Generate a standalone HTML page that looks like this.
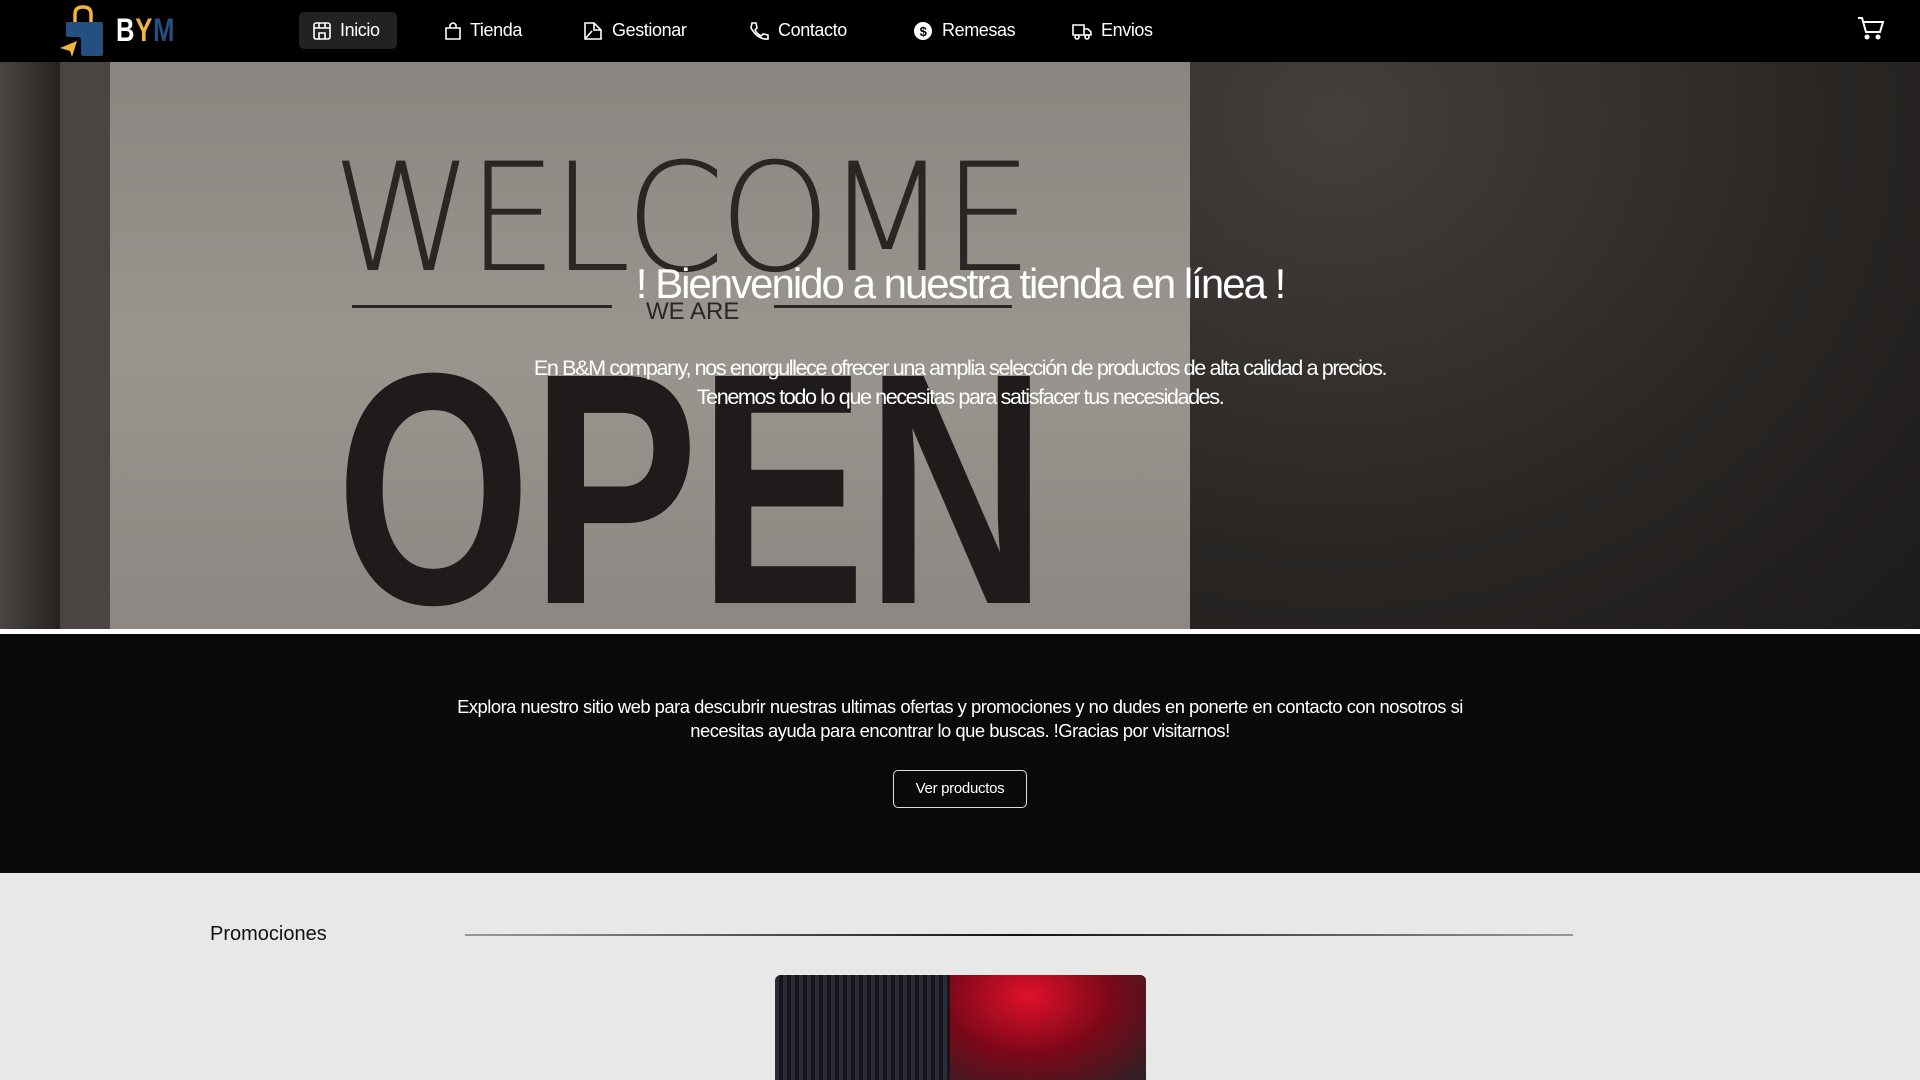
<!DOCTYPE html>
<html><head><meta charset="utf-8"><style>
*{margin:0;padding:0;box-sizing:border-box}
body{width:1920px;height:1080px;overflow:hidden;background:#e8e8e8;font-family:"Liberation Sans",sans-serif;position:relative}
.nav{position:absolute;left:0;top:0;width:1920px;height:62px;background:#000}
.ni{position:absolute;top:12px;height:37px;display:flex;align-items:center;color:#fff;font-size:18px;letter-spacing:-0.4px}
.ni svg{margin-right:8px}
.hero{position:absolute;left:0;top:62px;width:1920px;height:567px;background:#2f2b29;overflow:hidden}
.abs{position:absolute}
</style></head><body>
<div class="nav">
 <svg class="abs" style="left:58px;top:4px" width="50" height="54" viewBox="0 0 50 54">
  <path d="M17 18 V10 Q17 3 25 3 Q33 3 33 10 V18" fill="none" stroke="#f2b43c" stroke-width="3.5"/>
  <path d="M9 18 H43 Q45 18 45 20 V50 Q45 52 43 52 H26 Q23 52 23 49 V36 Q23 33 20 33 H10 Q8 33 8 31 V20 Q8 18 9 18Z" fill="#23507e"/>
  <path d="M2 44 L19 37 L14 53 L12 47Z" fill="#f2b43c"/>
 </svg>
 <div class="abs" style="left:116px;top:12px;font:bold 32px 'Liberation Sans Narrow','Liberation Sans',sans-serif;letter-spacing:1px;transform:scaleX(.8);transform-origin:left"><span style="color:#fff">B</span><span style="color:#f2b43c">Y</span><span style="color:#23507e">M</span></div>
 <div class="abs" style="left:299px;top:12px;width:98px;height:37px;background:#222;border-radius:5px"></div>
 <div class="ni" style="left:312px"><svg width="20" height="20" viewBox="0 0 20 20" fill="none" stroke="#fff" stroke-width="1.6"><rect x="2" y="2" width="16" height="16" rx="2"/><path d="M2 7H18M7 2V7M13 2V7M7 18V12H13V18"/></svg>Inicio</div>
 <div class="ni" style="left:444px"><svg width="18" height="20" viewBox="0 0 18 20" fill="none" stroke="#fff" stroke-width="1.6"><path d="M2 7H16V18H2Z M6 7V4Q9 0 12 4V7"/></svg>Tienda</div>
 <div class="ni" style="left:582px"><svg width="22" height="20" viewBox="0 0 22 20" fill="none" stroke="#fff" stroke-width="1.6"><path d="M3 2H12L19 9V18H3Z M3 18L10 10 M12 2V9H19"/></svg>Gestionar</div>
 <div class="ni" style="left:748px"><svg width="22" height="20" viewBox="0 0 22 20" fill="none" stroke="#fff" stroke-width="1.6"><path d="M4 2L8 2L9 7L7 9Q9 13 13 15L15 13L20 14V18Q10 19 3 7Z"/></svg>Contacto</div>
 <div class="ni" style="left:912px"><svg width="22" height="22" viewBox="0 0 22 22"><circle cx="11" cy="11" r="9" fill="#fff"/><text x="11" y="16" text-anchor="middle" font-size="13" font-weight="bold" fill="#000" font-family="Liberation Sans">$</text></svg>Remesas</div>
 <div class="ni" style="left:1071px"><svg width="22" height="20" viewBox="0 0 22 20" fill="none" stroke="#fff" stroke-width="1.6"><path d="M2 4H13V14H2Z M13 8H17L20 11V14H13"/><circle cx="6" cy="16" r="2" fill="#000"/><circle cx="16" cy="16" r="2" fill="#000"/></svg>Envios</div>
 <svg class="abs" style="left:1857px;top:16px" width="28" height="26" viewBox="0 0 28 26" fill="none" stroke="#fff" stroke-width="2"><path d="M1 2H5L9 16H23L26 6H7"/><circle cx="10" cy="21" r="1.5" fill="#fff"/><circle cx="21" cy="21" r="1.5" fill="#fff"/></svg>
</div>
<div class="hero">
 <div class="abs" style="left:0;top:0;width:60px;height:567px;background:linear-gradient(90deg,#4a4543,#25221f)"></div>
 <div class="abs" style="left:60px;top:0;width:50px;height:567px;background:#4a4542"></div>
 <div class="abs" style="left:110px;top:0;width:1080px;height:567px;background:linear-gradient(180deg,#8a8580,#9a958f 50%,#8c8782)"></div>
 <div class="abs" style="left:1190px;top:0;width:730px;height:567px;background:radial-gradient(ellipse at 20% 10%,#453f3c,#292624 60%,#1d1b1a)"></div>
 <div class="abs" style="left:332px;top:70px;font:200 150px 'DejaVu Sans',sans-serif;color:#2a2624;letter-spacing:-6px;transform:scaleX(.95);transform-origin:left">WELCOME</div>
 <div class="abs" style="left:352px;top:243px;width:260px;height:3px;background:#2a2624"></div>
 <div class="abs" style="left:774px;top:243px;width:238px;height:3px;background:#2a2624"></div>
 <div class="abs" style="left:646px;top:236px;font:24px 'Liberation Sans',sans-serif;color:#2a2624">WE ARE</div>
 <div class="abs" style="left:336px;top:262px;font:bold 330px 'Liberation Sans Narrow','Liberation Sans',sans-serif;color:#1e1b1a;transform:scaleX(.76);transform-origin:left;line-height:1">OPEN</div>
 <div class="abs" style="left:0;top:198px;width:1920px;text-align:center;color:#fff;font-size:42px;letter-spacing:-2px">! Bienvenido a nuestra tienda en línea !</div>
 <div class="abs" style="left:0;top:291px;width:1920px;text-align:center;color:#fff;font-size:21.6px;letter-spacing:-1.4px;line-height:29px">En B&amp;M company, nos enorgullece ofrecer una amplia selección de productos de alta calidad a precios.<br>Tenemos todo lo que necesitas para satisfacer tus necesidades.</div>
</div>
<div class="abs" style="left:0;top:629px;width:1920px;height:5px;background:#fff"></div>
<div class="abs" style="left:0;top:634px;width:1920px;height:239px;background:#0a0a0a"></div>
<div class="abs" style="left:0;top:695px;width:1920px;text-align:center;color:#fff;font-size:18.4px;letter-spacing:-0.5px;line-height:24px">Explora nuestro sitio web para descubrir nuestras ultimas ofertas y promociones y no dudes en ponerte en contacto con nosotros si<br>necesitas ayuda para encontrar lo que buscas. !Gracias por visitarnos!</div>
<div class="abs" style="left:893px;top:770px;width:134px;height:38px;border:1.5px solid #ddd;border-radius:5px;color:#fff;font-size:15px;text-align:center;line-height:35px;letter-spacing:-0.3px">Ver productos</div>
<div class="abs" style="left:210px;top:923px;font-size:20px;color:#111">Promociones</div>
<div class="abs" style="left:465px;top:934px;width:1108px;height:2px;background:linear-gradient(90deg,#999,#111 50%,#999)"></div>
<div class="abs" style="left:775px;top:975px;width:371px;height:105px;border-radius:6px 6px 0 0;overflow:hidden;background:#222">
 <div class="abs" style="left:0;top:0;width:175px;height:105px;background:repeating-linear-gradient(90deg,#2a2d35 0 4px,#14161b 4px 8px)"></div>
 <div class="abs" style="left:175px;top:0;width:196px;height:105px;background:radial-gradient(ellipse at 40% 20%,#e0102a,#7a0818 50%,#2a2226)"></div>
</div>
</body></html>
